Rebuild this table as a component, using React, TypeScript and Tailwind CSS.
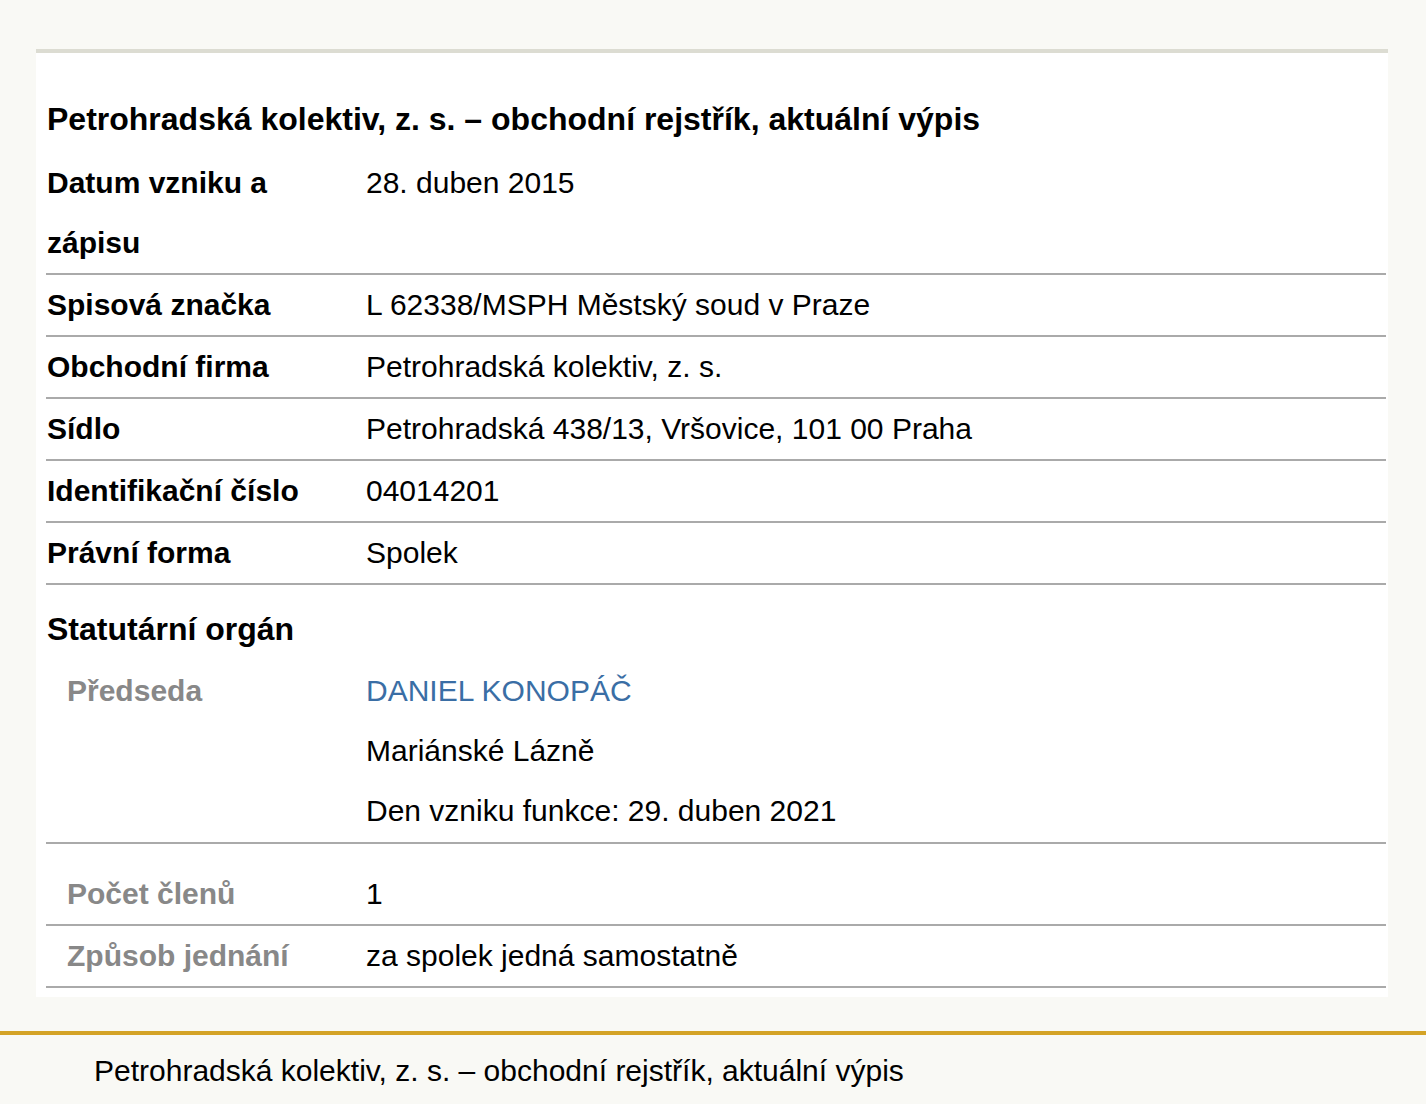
export default function App() {
  const rows: [string, string][] = [
    ['Spisová značka', 'L 62338/MSPH Městský soud v Praze'],
    ['Obchodní firma', 'Petrohradská kolektiv, z. s.'],
    ['Sídlo', 'Petrohradská 438/13, Vršovice, 101 00 Praha'],
    ['Identifikační číslo', '04014201'],
    ['Právní forma', 'Spolek'],
  ];

  return (
    <div className="min-h-screen bg-[#f9f9f5] font-['Liberation_Sans',Arial,sans-serif] text-[30px] leading-[60px] text-black">
      {/* Main card */}
      <div className="ml-[36px] w-[1352px] pt-[49px]">
        <div className="border-t-4 border-[#dcdcd2] bg-white pl-[10px] pr-[2px] pt-[36px] pb-[9px]">
          <h1 className="text-[32px] font-bold leading-[60px] mb-[4px] pl-px">
            Petrohradská kolektiv, z. s. – obchodní rejstřík, aktuální výpis
          </h1>

          <div className="flex border-b-2 border-[#aaaaaa]">
            <div className="w-[320px] shrink-0 pl-px pr-4 font-bold">Datum vzniku a zápisu</div>
            <div>28. duben 2015</div>
          </div>
          {rows.map(([label, value]) => (
            <div key={label} className="flex border-b-2 border-[#aaaaaa]">
              <div className="w-[320px] shrink-0 pl-px font-bold">{label}</div>
              <div>{value}</div>
            </div>
          ))}

          {/* Statutory body */}
          <h2 className="mt-[14px] mb-[2px] pl-px text-[32px] font-bold">Statutární orgán</h2>
          <div className="flex border-b-2 border-[#aaaaaa] pb-px">
            <div className="w-[320px] shrink-0 pl-[21px] font-bold text-[#888888]">Předseda</div>
            <div className="flex flex-col">
              <span className="text-[#3a6ea5]">DANIEL KONOPÁČ</span>
              <span>Mariánské Lázně</span>
              <span>Den vzniku funkce: 29. duben 2021</span>
            </div>
          </div>
          <div className="flex border-b-2 border-[#aaaaaa] pt-[20px]">
            <div className="w-[320px] shrink-0 pl-[21px] font-bold text-[#888888]">Počet členů</div>
            <div>1</div>
          </div>
          <div className="flex border-b-2 border-[#aaaaaa]">
            <div className="w-[320px] shrink-0 pl-[21px] font-bold text-[#888888]">Způsob jednání</div>
            <div>za spolek jedná samostatně</div>
          </div>
        </div>
      </div>

      {/* Footer */}
      <footer className="mt-[34px] border-t-4 border-[#d4a326] pl-[94px] pt-[6px] pb-[4px]">
        Petrohradská kolektiv, z. s. – obchodní rejstřík, aktuální výpis
      </footer>
    </div>
  );
}
